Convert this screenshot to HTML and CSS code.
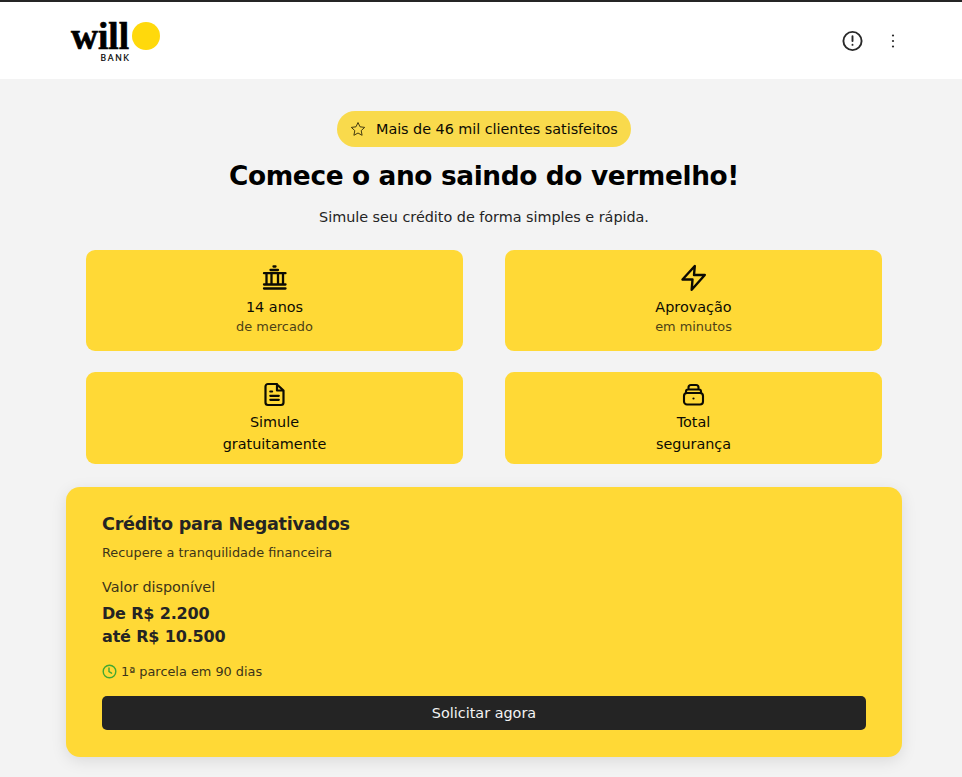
FILE: index.html
```html
<!DOCTYPE html>
<html lang="pt-BR">
<head>
<meta charset="utf-8">
<title>will bank</title>
<link rel="stylesheet" href="styles.css">
</head>
<body>
<header class="header">
  <svg class="logo" width="92" height="44" viewBox="0 0 92 44" role="img" aria-label="will bank">
    <text class="logo-name" x="1" y="28.600" textLength="58" lengthAdjust="spacingAndGlyphs">will</text>
    <circle cx="76" cy="16" r="14" fill="#ffd90c"/>
    <text class="logo-sub" x="30.5" y="40.500" textLength="28.5">BANK</text>
  </svg>
  <div class="actions">
    <svg width="22" height="22" viewBox="0 0 22 22" fill="none" stroke="#292929" stroke-width="1.9" stroke-linecap="round"><circle cx="11.500" cy="11" r="9.1"/><path d="M11.500 6.3v4.8M11.500 14.8v.1"/></svg>
    <svg width="4" height="16" viewBox="0 0 4 16" fill="#292929"><circle cx="2" cy="2.5" r="1.100"/><circle cx="2" cy="8" r="1.100"/><circle cx="2" cy="13.5" r="1.100"/></svg>
  </div>
</header>
<main class="content">
  <div class="pill">
    <svg width="16" height="16" viewBox="0 0 16 16" fill="none" stroke="#453c10" stroke-width="1" stroke-linejoin="round"><path d="m8 1.5 2 4.3 4.7.6-3.5 3.2.9 4.7L8 12l-4.100 2.300.9-4.700L1.300 6.400 6 5.800z"/></svg>
    <span>Mais de 46 mil clientes satisfeitos</span>
  </div>
  <h1 class="title">Comece o ano saindo do vermelho!</h1>
  <p class="subtitle">Simule seu crédito de forma simples e rápida.</p>
  <section class="benefits">
    <article class="benefit tall">
      <svg width="28" height="28" viewBox="0 0 28 28" fill="none" stroke="#0c0b03" stroke-width="2.300" stroke-linecap="round"><path d="M12.500 2.500h2M9.500 6h7.500M3 9.200h21.500M3 20.500h21.500M3 24.500h21.500M5.500 9.500v11M10.500 9.500v11M17 9.500v11M22 9.500v11"/></svg>
      <strong>14 anos</strong><small>de mercado</small>
    </article>
    <article class="benefit tall">
      <svg width="28" height="28" viewBox="0 0 28 28" fill="none" stroke="#0c0b03" stroke-width="2.400" stroke-linejoin="round"><path d="M14.800 2 2.500 15.500h10l-.8 10.300L24.800 11H14z"/></svg>
      <strong>Aprovação</strong><small>em minutos</small>
    </article>
    <article class="benefit">
      <svg width="28" height="28" viewBox="0 0 28 28" fill="none" stroke="#0c0b03" stroke-width="2.200" stroke-linecap="round" stroke-linejoin="round"><path d="M15.500 4H7a2.500 2.500 0 0 0-2.500 2.500v16A2.500 2.500 0 0 0 7 25h13a2.500 2.500 0 0 0 2.500-2.500V10.500zM16 4v6.500h6.500M9.300 11.500h1.800M9.300 15.800h8.500M9.300 19.800h8.500"/></svg>
      <strong>Simule</strong><strong>gratuitamente</strong>
    </article>
    <article class="benefit">
      <svg width="28" height="28" viewBox="0 0 28 28" fill="none" stroke="#0c0b03" stroke-width="2.100" stroke-linecap="round" stroke-linejoin="round"><rect x="4" y="13" width="19" height="11.500" rx="3"/><path d="M6 13v-1.500a2 2 0 0 1 2-2h11a2 2 0 0 1 2 2V13M8.500 9.500V7.500Q8.500 5 11 5h5Q18.500 5 18.500 7.500v2"/><circle cx="13.500" cy="18.500" r="1.100" fill="#0c0b03" stroke="none"/></svg>
      <strong>Total</strong><strong>segurança</strong>
    </article>
  </section>
  <section class="offer">
    <h2>Crédito para Negativados</h2>
    <p class="tagline">Recupere a tranquilidade financeira</p>
    <p class="label">Valor disponível</p>
    <p class="amount">De R$ 2.200<br>até R$ 10.500</p>
    <p class="term">
      <svg width="15" height="15" viewBox="0 0 15 15" fill="none" stroke="#42a832" stroke-width="1.400" stroke-linecap="round"><circle cx="7.500" cy="7.500" r="6.300"/><path d="M7 4v3.700l2.600 1.500"/></svg>
      <span>1ª parcela em 90 dias</span>
    </p>
    <button class="apply">Solicitar agora</button>
  </section>
</main>
</body>
</html>
```

FILE: styles.css
```css
* { box-sizing: border-box; }
body { margin: 0; background: #f3f3f3; color: #0c0b03; font-family: "DejaVu Sans", sans-serif; height: 777px; overflow: hidden; }
h1, h2, p { margin: 0; }
svg { display: block; flex: none; }
.header { height: 79px; border-top: 2px solid #252525; background: #fff; padding: 18px 67px 0 70px; display: flex; justify-content: space-between; align-items: flex-start; }
.logo { overflow: visible; }
.logo-name { font: bold 37px "Liberation Serif", serif; stroke: #000; stroke-width: .7px; }
.logo-sub { font: 8.5px Lato, sans-serif; stroke: #000; stroke-width: .2px; }
.actions { display: flex; align-items: center; gap: 28px; padding-top: 10px; }
.content { width: 836px; margin-left: 66px; padding-top: 32px; display: flex; flex-direction: column; align-items: center; }
.pill { width: 294px; height: 36px; border-radius: 18px; background: #f9da4c; display: flex; align-items: center; padding-left: 13px; gap: 10px; font-size: 14.4px; letter-spacing: -.04px; white-space: nowrap; }
.title { margin-top: 11px; font-size: 26.4px; letter-spacing: -.38px; line-height: 36px; color: #000; white-space: nowrap; }
.subtitle { margin-top: 12px; font-size: 14.4px; letter-spacing: -.03px; line-height: 22px; color: #242424; }
.benefits { align-self: stretch; margin: 22px 20px 23px; display: grid; grid-template-columns: 1fr 1fr; grid-template-rows: 101px 92px; column-gap: 42px; row-gap: 21px; }
.benefit { border-radius: 9px; background: #ffd936; display: flex; flex-direction: column; align-items: center; padding-top: 8px; }
.benefit.tall { padding-top: 14px; }
.benefit strong { font-weight: 400; font-size: 14.4px; line-height: 22px; }
.benefit svg + strong { margin-top: 3px; }
.benefit.tall svg + strong { margin-top: 4px; }
.benefit small { font-size: 12.9px; line-height: 18px; color: #4d4215; }
.offer { align-self: stretch; height: 270px; border-radius: 14px; background: #ffd936; box-shadow: 0 4px 16px rgba(0,0,0,.1); padding: 24px 36px 0; color: #242424; }
.offer h2 { font-size: 17.6px; letter-spacing: -.26px; line-height: 26px; }
.tagline { margin-top: 6px; font-size: 12.87px; line-height: 20px; color: #3c3419; }
.label { margin-top: 13px; font-size: 14.4px; letter-spacing: -.05px; line-height: 22px; color: #3c3419; }
.amount { margin-top: 4px; font-size: 16px; letter-spacing: -.17px; line-height: 23px; font-weight: 700; }
.term { margin-top: 13px; height: 20px; display: flex; align-items: center; gap: 4px; font-size: 12.87px; color: #3c3419; }
.apply { display: block; width: 100%; height: 34px; margin-top: 15px; padding: 0; border: 0; border-radius: 5px; background: #242424; color: #f3f3f3; font: 14.4px "DejaVu Sans", sans-serif; }
```
